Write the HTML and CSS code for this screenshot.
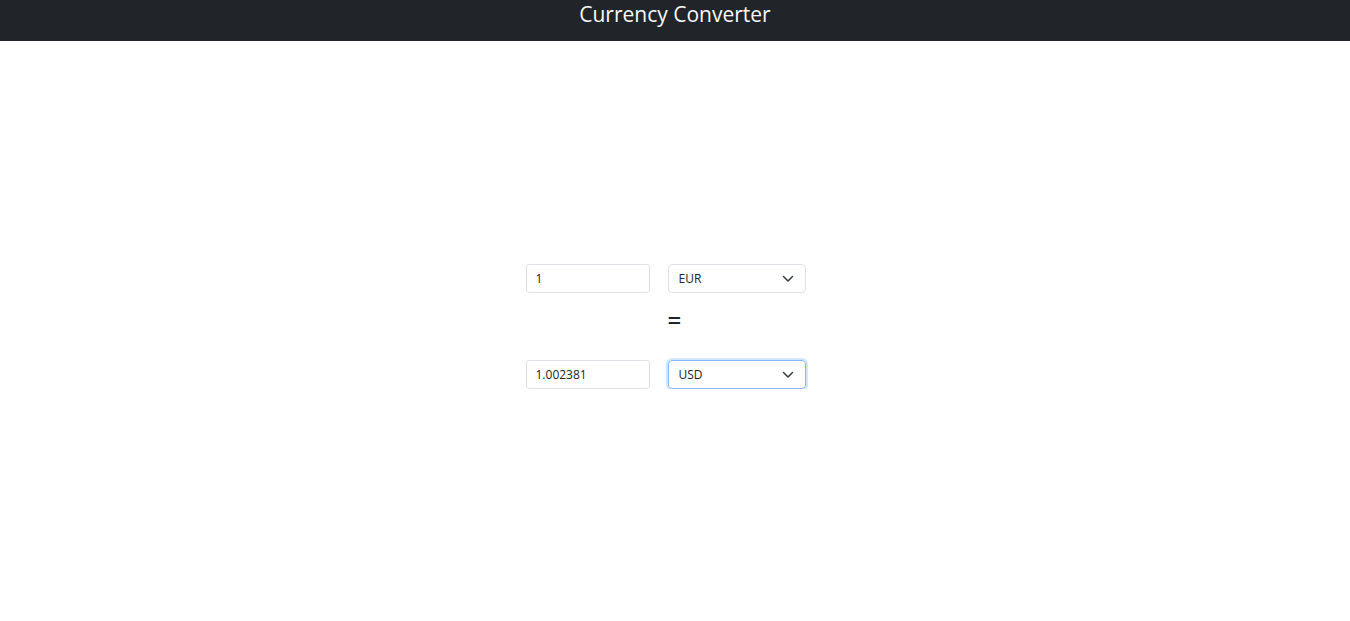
FILE: index.html
```html
<!DOCTYPE html>
<html>
<head>
<meta charset="utf-8">
<link rel="stylesheet" href="styles.css">
</head>
<body>
<header class="topbar"><h1 class="title">Currency Converter</h1></header>
<main class="main">
  <div class="converter">
    <input class="field" type="text" value="1">
    <div class="select"><span>EUR</span><svg class="chev" width="12" height="8" viewBox="0 0 12 8"><path d="M1.5 1.5l4.5 4.5 4.5-4.5" fill="none" stroke="#343a40" stroke-width="1.5" stroke-linecap="round" stroke-linejoin="round"/></svg></div>
    <div class="spacer"></div>
    <div class="eq">=</div>
    <input class="field" type="text" value="1.002381">
    <div class="select focus"><span>USD</span><svg class="chev" width="12" height="8" viewBox="0 0 12 8"><path d="M1.5 1.5l4.5 4.5 4.5-4.5" fill="none" stroke="#343a40" stroke-width="1.5" stroke-linecap="round" stroke-linejoin="round"/></svg></div>
  </div>
</main>
</body>
</html>
```
FILE: styles.css
```css
* { box-sizing: border-box; }
html, body { margin: 0; padding: 0; background: #fff; }
body { font-family: "Open Sans", "Noto Sans", sans-serif; color: #212529; }
.topbar {
  background: #212529;
  height: 41px;
  display: flex;
  justify-content: center;
}
.title {
  margin: 0;
  color: #f8f9fa;
  font-weight: 400;
  font-size: 21px;
  line-height: 28px;
}
.main {
  padding-top: 223px;
  padding-right: 19px;
  display: flex;
  justify-content: center;
}
.converter {
  display: grid;
  grid-template-columns: 124px 138px;
  grid-template-rows: 29px 67px 29px;
  column-gap: 18px;
}
.field {
  width: 124px;
  height: 29px;
  border: 1px solid #dee2e6;
  border-radius: 3px;
  padding: 0 9px;
  font-family: "Open Sans", sans-serif;
  font-size: 12px;
  color: #212529;
  outline: none;
}
.select {
  height: 29px;
  border: 1px solid #dee2e6;
  border-radius: 4px;
  padding: 0 11px 0 10px;
  font-size: 12px;
  display: flex;
  align-items: center;
  justify-content: space-between;
}
.select.focus {
  border-color: #86b7fe;
  box-shadow: 0 0 0 2px rgba(13, 110, 253, 0.18);
}
.eq {
  font-size: 24px;
  line-height: 24px;
  font-weight: 600;
  padding-top: 15px;
}
```
